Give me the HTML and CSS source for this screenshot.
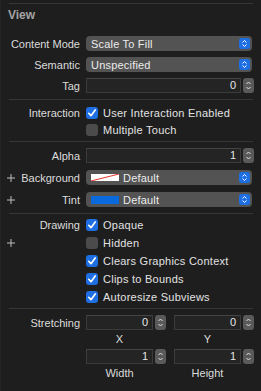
FILE: index.html
```html
<!DOCTYPE html>
<html lang="en">
  <head>
    <meta charset="UTF-8" />
    <meta name="viewport" content="width=device-width, initial-scale=1.0" />
    <title>View Inspector</title>
    <link rel="stylesheet" href="styles.css">
  </head>
  <body>
    <div class="inspector">
      <div class="rule rule-top"></div>
      <h2 class="title">View</h2>

      <!-- view basics -->
      <div class="group group-basic">
        <div class="row">
          <div class="label">Content Mode</div>
          <div class="popup">
            <span>Scale To Fill</span>
            <svg class="popup-arrow" width="11" height="11" viewBox="0 0 11 11"><rect width="11" height="11" rx="2.5" fill="#1d6fe2"/><path d="M3.5 4.5 L5.5 2.5 L7.5 4.5 M3.5 6.5 L5.5 8.5 L7.5 6.5" stroke="#fff" stroke-width="1" fill="none"/></svg>
          </div>
        </div>
        <div class="row">
          <div class="label">Semantic</div>
          <div class="popup">
            <span>Unspecified</span>
            <svg class="popup-arrow" width="11" height="11" viewBox="0 0 11 11"><rect width="11" height="11" rx="2.5" fill="#1d6fe2"/><path d="M3.5 4.5 L5.5 2.5 L7.5 4.5 M3.5 6.5 L5.5 8.5 L7.5 6.5" stroke="#fff" stroke-width="1" fill="none"/></svg>
          </div>
        </div>
        <div class="row">
          <div class="label">Tag</div>
          <div class="number">
            <div class="field">0</div>
            <svg class="stepper" width="11" height="15" viewBox="0 0 11 15"><rect width="11" height="15" rx="3" fill="#5a5a5a"/><path d="M3.5 6 L5.5 4 L7.5 6 M3.5 9 L5.5 11 L7.5 9" stroke="#e2e2e2" stroke-width="1" fill="none"/></svg>
          </div>
        </div>
      </div>

      <div class="rule"></div>

      <div class="group group-interaction">
        <div class="row check-row">
          <div class="label">Interaction</div>
          <label class="check"><span class="box on"><svg width="12" height="12" viewBox="0 0 12 12"><path d="M2.8 6.3 L5 8.7 L9.2 3" stroke="#fff" stroke-width="1.7" fill="none" stroke-linecap="round" stroke-linejoin="round"/></svg></span>User Interaction Enabled</label>
        </div>
        <div class="row check-row">
          <div class="label"></div>
          <label class="check"><span class="box"></span>Multiple Touch</label>
        </div>
      </div>

      <div class="rule"></div>

      <div class="group group-colors">
        <div class="row">
          <div class="label">Alpha</div>
          <div class="number">
            <div class="field">1</div>
            <svg class="stepper" width="11" height="15" viewBox="0 0 11 15"><rect width="11" height="15" rx="3" fill="#5a5a5a"/><path d="M3.5 6 L5.5 4 L7.5 6 M3.5 9 L5.5 11 L7.5 9" stroke="#e2e2e2" stroke-width="1" fill="none"/></svg>
          </div>
        </div>
        <div class="row">
          <div class="label has-add">
            <svg class="add" width="8" height="8" viewBox="0 0 8 8"><path d="M4 0 V8 M0 4 H8" stroke="#bdbdbd" stroke-width="1"/></svg>
            <span>Background</span>
          </div>
          <div class="popup">
            <svg class="swatch" width="28" height="7" viewBox="0 0 28 7"><rect width="28" height="7" fill="#fff"/><path d="M0 7 L28 0" stroke="#e8332c" stroke-width="1"/></svg>
            <span>Default</span>
            <svg class="popup-arrow" width="11" height="11" viewBox="0 0 11 11"><rect width="11" height="11" rx="2.5" fill="#1d6fe2"/><path d="M3.5 4.5 L5.5 2.5 L7.5 4.5 M3.5 6.5 L5.5 8.5 L7.5 6.5" stroke="#fff" stroke-width="1" fill="none"/></svg>
          </div>
        </div>
        <div class="row">
          <div class="label has-add">
            <svg class="add" width="8" height="8" viewBox="0 0 8 8"><path d="M4 0 V8 M0 4 H8" stroke="#bdbdbd" stroke-width="1"/></svg>
            <span>Tint</span>
          </div>
          <div class="popup">
            <span class="swatch swatch-blue"></span>
            <span>Default</span>
            <svg class="popup-arrow" width="11" height="11" viewBox="0 0 11 11"><rect width="11" height="11" rx="2.5" fill="#1d6fe2"/><path d="M3.5 4.5 L5.5 2.5 L7.5 4.5 M3.5 6.5 L5.5 8.5 L7.5 6.5" stroke="#fff" stroke-width="1" fill="none"/></svg>
          </div>
        </div>
      </div>

      <div class="rule"></div>

      <div class="group group-drawing">
        <div class="row draw-row">
          <div class="label">Drawing</div>
          <label class="check"><span class="box on"><svg width="12" height="12" viewBox="0 0 12 12"><path d="M2.8 6.3 L5 8.7 L9.2 3" stroke="#fff" stroke-width="1.7" fill="none" stroke-linecap="round" stroke-linejoin="round"/></svg></span>Opaque</label>
        </div>
        <div class="row draw-row">
          <div class="label has-add">
            <svg class="add" width="8" height="8" viewBox="0 0 8 8"><path d="M4 0 V8 M0 4 H8" stroke="#bdbdbd" stroke-width="1"/></svg>
            <span></span>
          </div>
          <label class="check"><span class="box"></span>Hidden</label>
        </div>
        <div class="row draw-row">
          <div class="label"></div>
          <label class="check"><span class="box on"><svg width="12" height="12" viewBox="0 0 12 12"><path d="M2.8 6.3 L5 8.7 L9.2 3" stroke="#fff" stroke-width="1.7" fill="none" stroke-linecap="round" stroke-linejoin="round"/></svg></span>Clears Graphics Context</label>
        </div>
        <div class="row draw-row">
          <div class="label"></div>
          <label class="check"><span class="box on"><svg width="12" height="12" viewBox="0 0 12 12"><path d="M2.8 6.3 L5 8.7 L9.2 3" stroke="#fff" stroke-width="1.7" fill="none" stroke-linecap="round" stroke-linejoin="round"/></svg></span>Clips to Bounds</label>
        </div>
        <div class="row draw-row">
          <div class="label"></div>
          <label class="check"><span class="box on"><svg width="12" height="12" viewBox="0 0 12 12"><path d="M2.8 6.3 L5 8.7 L9.2 3" stroke="#fff" stroke-width="1.7" fill="none" stroke-linecap="round" stroke-linejoin="round"/></svg></span>Autoresize Subviews</label>
        </div>
      </div>

      <div class="rule"></div>

      <!-- stretching -->
      <div class="group group-stretch">
        <div class="row">
          <div class="label">Stretching</div>
          <div class="pair">
            <div class="number">
              <div class="field">0</div>
              <svg class="stepper" width="11" height="15" viewBox="0 0 11 15"><rect width="11" height="15" rx="3" fill="#5a5a5a"/><path d="M3.5 6 L5.5 4 L7.5 6 M3.5 9 L5.5 11 L7.5 9" stroke="#e2e2e2" stroke-width="1" fill="none"/></svg>
            </div>
            <div class="number">
              <div class="field">0</div>
              <svg class="stepper" width="11" height="15" viewBox="0 0 11 15"><rect width="11" height="15" rx="3" fill="#5a5a5a"/><path d="M3.5 6 L5.5 4 L7.5 6 M3.5 9 L5.5 11 L7.5 9" stroke="#e2e2e2" stroke-width="1" fill="none"/></svg>
            </div>
          </div>
        </div>
        <div class="row caption-row">
          <div class="label"></div>
          <div class="pair">
            <div class="caption">X</div>
            <div class="caption">Y</div>
          </div>
        </div>
        <div class="row size-row">
          <div class="label"></div>
          <div class="pair">
            <div class="number">
              <div class="field">1</div>
              <svg class="stepper" width="11" height="15" viewBox="0 0 11 15"><rect width="11" height="15" rx="3" fill="#5a5a5a"/><path d="M3.5 6 L5.5 4 L7.5 6 M3.5 9 L5.5 11 L7.5 9" stroke="#e2e2e2" stroke-width="1" fill="none"/></svg>
            </div>
            <div class="number">
              <div class="field">1</div>
              <svg class="stepper" width="11" height="15" viewBox="0 0 11 15"><rect width="11" height="15" rx="3" fill="#5a5a5a"/><path d="M3.5 6 L5.5 4 L7.5 6 M3.5 9 L5.5 11 L7.5 9" stroke="#e2e2e2" stroke-width="1" fill="none"/></svg>
            </div>
          </div>
        </div>
        <div class="row caption-row">
          <div class="label"></div>
          <div class="pair">
            <div class="caption">Width</div>
            <div class="caption">Height</div>
          </div>
        </div>
      </div>
    </div>
  </body>
</html>
```

FILE: styles.css
```css
body {
  margin: 0;
  background: #1e1e1e;
  font-family: "Liberation Sans", Arial, sans-serif;
  font-size: 11px;
  color: #dedede;
}

.inspector {
  width: 261px;
  height: 391px;
  box-sizing: border-box;
  border-left: 1px solid #242424;
  overflow: hidden;
}

/* separators */
.rule {
  height: 1px;
  margin: 0 8px 0 8px;
  background: #363636;
}

.rule-top {
  margin-top: 3px;
}

.title {
  margin: 4px 0 0 7px;
  height: 14px;
  line-height: 14px;
  font-size: 12px;
  font-weight: bold;
  color: #a3a3a3;
}

.group {
  display: flex;
  flex-direction: column;
}

.group-basic {
  margin-top: 14px;
  margin-bottom: 6px;
  gap: 6px;
}

.group-interaction {
  margin-top: 4px;
  margin-bottom: 3px;
}

.group-colors {
  margin-top: 6px;
  margin-bottom: 6px;
  gap: 7px;
}

.group-drawing {
  margin-top: 2px;
  margin-bottom: 2px;
}

.group-stretch {
  margin-top: 6px;
}

/* rows */
.row {
  display: grid;
  grid-template-columns: 79px 168px;
  column-gap: 6px;
  align-items: center;
  height: 15px;
}

.check-row {
  height: 17px;
}

.draw-row {
  height: 18px;
}

.caption-row {
  height: 14px;
  margin: 2px 0 3px;
}

.label {
  display: flex;
  justify-content: flex-end;
  align-items: center;
  white-space: nowrap;
  color: #dcdcdc;
}

.label.has-add {
  justify-content: space-between;
  padding-left: 6px;
}

.add {
  display: block;
}

/* popup buttons */
.popup {
  display: flex;
  align-items: center;
  gap: 4px;
  width: 166px;
  height: 15px;
  box-sizing: border-box;
  padding: 0 2px 0 5px;
  border-radius: 4px;
  background: #535353;
  color: #ececec;
  letter-spacing: 0.2px;
}

.popup-arrow {
  margin-left: auto;
  display: block;
}

.swatch {
  display: block;
  width: 28px;
  height: 7px;
  flex: none;
}

.swatch-blue {
  height: 8px;
  background: #0a69dc;
}

/* number fields */
.number {
  display: flex;
  align-items: center;
  gap: 2px;
}

.field {
  flex: 1;
  height: 15px;
  box-sizing: border-box;
  padding-right: 4px;
  border: 1px solid #3b3b3b;
  border-top-color: #444;
  background: #242424;
  text-align: right;
  line-height: 13px;
  color: #e6e6e6;
}

.stepper {
  display: block;
  flex: none;
}

.pair {
  display: grid;
  grid-template-columns: 1fr 1fr;
  column-gap: 8px;
}

.caption {
  width: 67px;
  text-align: center;
  line-height: 14px;
  color: #dcdcdc;
}

/* checkboxes */
.check {
  display: flex;
  align-items: center;
  gap: 5px;
  white-space: nowrap;
  color: #e2e2e2;
  letter-spacing: 0.25px;
}

.box {
  display: block;
  width: 12px;
  height: 12px;
  border-radius: 3px;
  background: #4b4b4b;
  flex: none;
}

.box.on {
  background: #1d6fe2;
}

.box svg {
  display: block;
}
```
